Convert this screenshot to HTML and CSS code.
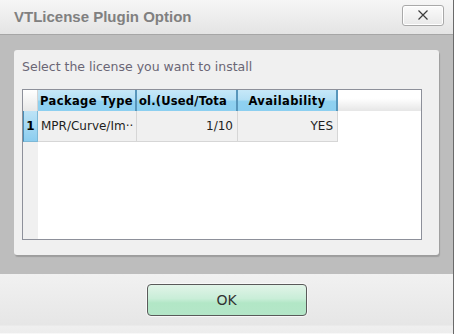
FILE: index.html
```html
<!DOCTYPE html>
<html>
<head>
<meta charset="utf-8">
<link rel="stylesheet" href="styles.css">
</head>
<body>
<div class="window">
  <div class="titlebar">
    <div class="title">VTLicense Plugin Option</div>
    <button class="close" aria-label="Close">
      <svg width="12" height="12" viewBox="0 0 12 12"><path d="M1.5 1.5 L10.5 10.5 M10.5 1.5 L1.5 10.5" stroke="#3c3c3c" stroke-width="1.2" fill="none"/></svg>
    </button>
  </div>
  <div class="main">
    <div class="panel">
      <div class="prompt">Select the license you want to install</div>
      <div class="grid">
        <div class="row head">
          <div class="rh"></div>
          <div class="cell c1">Package Type</div>
          <div class="cell c2 left">ol.(Used/Tota</div>
          <div class="cell c3">Availability</div>
          <div class="fill"></div>
        </div>
        <div class="row data">
          <div class="rh">1</div>
          <div class="cell c1">MPR/Curve/Im··</div>
          <div class="cell c2">1/10</div>
          <div class="cell c3">YES</div>
        </div>
        <div class="rest"><div class="rh"></div></div>
      </div>
    </div>
  </div>
  <div class="footer">
    <button class="ok">OK</button>
  </div>
</div>
</body>
</html>
```

FILE: styles.css
```css
html, body { margin: 0; padding: 0; background: #ffffff; }
body { width: 455px; height: 334px; overflow: hidden; }
.window {
  width: 453px; height: 334px;
  border-right: 1px solid #6a6a6a;
  display: flex; flex-direction: column;
  font-family: "DejaVu Sans", Verdana, sans-serif;
}
.titlebar {
  height: 34px;
  border-bottom: 1px solid #a6a6a6;
  background: linear-gradient(#f6f6f6, #e4e4e4);
  display: flex; align-items: center; justify-content: space-between;
  padding: 0 9px 0 14px;
}
.title {
  font-family: "Liberation Sans", Arial, sans-serif;
  font-weight: bold; font-size: 15px; color: #808080;
  margin-top: -2px;
}
.close {
  width: 42px; height: 21px; margin-top: -4px;
  border: 1px solid #a9a9a9; border-radius: 3px;
  background: linear-gradient(#fbfbfb, #e9e9e9);
  box-shadow: inset 0 0 0 1px #ffffff;
  display: flex; align-items: center; justify-content: center; padding: 0;
}
.main {
  height: 239px;
  background: #bdbdbd;
  padding: 15px 14px 0 14px;
  box-sizing: border-box;
}
.panel {
  height: 205px;
  background: #f0f0f0;
  border-radius: 3px;
  box-shadow: 1px 2px 1px #9d9d9d;
  padding: 9px 17px 0 8px;
  box-sizing: border-box;
}
.prompt {
  font-size: 12.5px; color: #6a6675; height: 30px; line-height: 16px;
  white-space: nowrap;
}
.grid {
  height: 151px; box-sizing: border-box;
  border: 1px solid #8d909a;
  background: #ffffff;
  display: flex; flex-direction: column;
  font-size: 12px;
}
.row { display: flex; }
.head { height: 21px; }
.head .rh {
  width: 15px;
  background: linear-gradient(#ffffff, #e8e8e8);
  border-right: 1px solid #d4d4d4;
  box-sizing: border-box;
}
.head .cell {
  box-sizing: border-box;
  background: linear-gradient(#c6e8f8 0%, #b4e0f5 45%, #8fd1f0 55%, #8ccff0 100%);
  border-right: 2px solid #5796bb;
  font-weight: bold; color: #000;
  display: flex; align-items: center; justify-content: center;
  overflow: hidden; white-space: nowrap;
  font-family: "DejaVu Sans", sans-serif; font-size: 11.5px;
  letter-spacing: 0.4px;
}
.head .left { justify-content: flex-start; padding-left: 2px; letter-spacing: 0.2px; }
.head .c1 { width: 99px; }
.head .c2 { width: 101px; }
.head .c3 { width: 100px; }
.head .fill { flex: 1; background: linear-gradient(#ffffff 40%, #e6e6e6); }
.data { height: 31px; }
.data .rh {
  width: 15px; box-sizing: border-box;
  background: linear-gradient(#bde3f6, #8ccdef);
  border-left: 1px solid #4b8fb8;
  border-right: 1px solid #7db8d6;
  border-bottom: 1px solid #7db8d6;
  font-weight: bold; font-size: 12px; color: #000;
  display: flex; align-items: center; justify-content: center;
}
.data .cell {
  box-sizing: border-box;
  background: #f0f0f0;
  border-right: 1px solid #d6d6d6;
  border-bottom: 1px solid #d6d6d6;
  display: flex; align-items: center;
  color: #1e1e1e; font-size: 12px; white-space: nowrap; overflow: hidden;
  padding: 0 4px 0 3px;
}
.data .c1 { width: 99px; }
.data .c2 { width: 101px; justify-content: flex-end; }
.data .c3 { width: 100px; justify-content: flex-end; }
.rest { flex: 1; display: flex; }
.rest .rh { width: 15px; background: #f0f0f0; }
.footer {
  flex: 1;
  background: linear-gradient(#f1f1f1 0%, #e6e6e6 85%, #efefef 87%, #ededed 98%, #ffffff 100%);
  display: flex; justify-content: center; align-items: flex-start;
  padding-top: 10px;
  box-sizing: border-box;
}
.ok {
  width: 160px; height: 32px;
  border: 1px solid #5a5a5a; border-radius: 4px;
  background: linear-gradient(#e1f4e8, #c9eed8 45%, #b2e7c6 60%, #b4e6c8);
  box-shadow: 0 0 0 1px #f8f8f8;
  font-family: "DejaVu Sans", sans-serif; font-size: 14px; color: #333;
  padding: 0;
}
```
